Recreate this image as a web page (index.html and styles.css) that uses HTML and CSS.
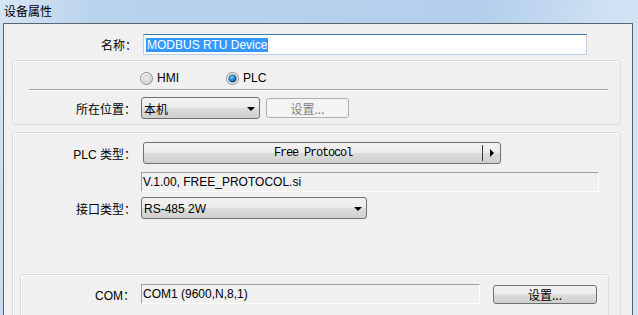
FILE: index.html
```html
<!DOCTYPE html>
<html lang="zh-CN">

<head>
    <meta charset="UTF-8">
    <meta name="viewport" content="width=device-width, initial-scale=1.0">
    <title>设备属性</title>
    <link rel="stylesheet" href="styles.css">
</head>

<body>
    <div class="title-bar">设备属性</div>

    <div class="panel">
        <div class="row name-row">
            <span class="label name-label">名称：</span>
            <div class="name-input"><span class="selected">MODBUS RTU Device</span></div>
        </div>

        <div class="group group-device">
            <div class="radio-row">
                <label class="radio radio-hmi">
                    <svg width="13" height="13" viewBox="0 0 13 13">
                        <defs>
                            <radialGradient id="rg-off" cx="0.35" cy="0.3" r="0.8">
                                <stop offset="0" stop-color="#ffffff" />
                                <stop offset="1" stop-color="#d0d0d0" />
                            </radialGradient>
                        </defs>
                        <circle cx="6.5" cy="6.5" r="6" fill="url(#rg-off)" stroke="#8f8f8f" />
                        <circle cx="6.5" cy="6.5" r="3.6" fill="#e2e2e2" stroke="#c4c4c4" stroke-width="0.6" />
                    </svg>
                    <span>HMI</span>
                </label>
                <label class="radio">
                    <svg width="13" height="13" viewBox="0 0 13 13">
                        <defs>
                            <radialGradient id="rg-dot" cx="0.4" cy="0.35" r="0.75">
                                <stop offset="0" stop-color="#7ed0ff" />
                                <stop offset="0.6" stop-color="#1a74c0" />
                                <stop offset="1" stop-color="#0b3f74" />
                            </radialGradient>
                        </defs>
                        <circle cx="6.5" cy="6.5" r="6" fill="#efefef" stroke="#8f8f8f" />
                        <circle cx="6.5" cy="6.5" r="3.8" fill="url(#rg-dot)" stroke="#1d4f7e" stroke-width="0.6" />
                    </svg>
                    <span>PLC</span>
                </label>
            </div>
            <div class="separator"></div>
            <div class="row">
                <span class="label group-label">所在位置：</span>
                <div class="combo combo-location">
                    <span>本机</span>
                    <span class="arrow-down"></span>
                </div>
                <div class="button button-disabled">设置...</div>
            </div>
        </div>

        <div class="group group-plc">
            <div class="row">
                <span class="label group-label">PLC 类型：</span>
                <div class="plc-button">
                    <span class="plc-text">Free Protocol</span>
                    <span class="plc-divider"></span>
                    <span class="plc-arrow"><span class="arrow-right"></span></span>
                </div>
            </div>
            <div class="info-box version-box">V.1.00, FREE_PROTOCOL.si</div>
            <div class="row interface-row">
                <span class="label group-label">接口类型：</span>
                <div class="combo combo-interface">
                    <span>RS-485 2W</span>
                    <span class="arrow-down"></span>
                </div>
            </div>

            <div class="group group-com">
                <div class="row">
                    <span class="label com-label">COM：</span>
                    <div class="info-box com-box">COM1 (9600,N,8,1)</div>
                    <div class="button button-setup">设置...</div>
                </div>
            </div>
        </div>
    </div>
</body>

</html>
```

FILE: styles.css
```css
body {
    margin: 0;
    height: 315px;
    overflow: hidden;
    font-family: "Liberation Sans", "Noto Sans CJK SC", sans-serif;
    font-size: 12px;
    color: #000;
    background: linear-gradient(100deg, #d6e5f4 0%, #b9d3ed 14%, #b3cfeb 70%, #cfe1f3 88%, #d4e4f4 100%);
}

.title-bar {
    height: 23px;
    line-height: 22px;
    padding-left: 4px;
    font-family: "Noto Sans CJK SC", sans-serif;
    font-size: 12px;
}

.panel {
    margin: 0 5px 0 3px;
    height: 300px;
    padding: 10px 11px 0 8px;
    background-color: #f0f0f0;
    border-top: 1px solid #5a6470;
    border-left: 1px solid #5a6470;
    border-right: 1px solid #5a6470;
}

.row {
    display: flex;
    align-items: center;
}

.label {
    text-align: right;
    white-space: nowrap;
    font-family: "Liberation Sans", "Noto Sans CJK SC", sans-serif;
}

.name-label {
    width: 125px;
    margin-right: 6px;
}

.group-label {
    width: 123px;
    margin-right: 5px;
}

.com-label {
    width: 114px;
    margin-right: 6px;
}

.name-input {
    box-sizing: border-box;
    width: 444px;
    height: 21px;
    padding: 3px 0 0 2px;
    background-color: #fff;
    border: 1px solid #b7d0e8;
    border-top-color: #3c7bb0;
}

.selected {
    display: inline-block;
    height: 14px;
    line-height: 14px;
    padding: 0 1px;
    background-color: #3399ff;
    color: #fff;
}

.group {
    border: 1px solid #d5dfe5;
    border-radius: 3px;
    box-shadow: inset 1px 1px 0 #fff;
}

.group-device {
    margin-top: 5px;
    padding: 9px 0 5px 0;
}

.radio-row {
    display: flex;
    height: 16px;
    align-items: center;
    padding-left: 127px;
}

.radio {
    display: flex;
    align-items: center;
    gap: 4px;
}

.radio svg {
    display: block;
}

.radio-hmi {
    width: 86px;
}

.separator {
    margin: 3px 12px 7px 16px;
    height: 1px;
    background-color: #a0a0a0;
    box-shadow: 0 1px 0 #fff;
}

.combo {
    box-sizing: border-box;
    height: 22px;
    display: flex;
    align-items: center;
    justify-content: space-between;
    padding: 1px 4px 0 2px;
    border: 1px solid #707070;
    border-radius: 3px;
    background: linear-gradient(#f2f2f2 0%, #ebebeb 50%, #dddddd 50%, #cfcfcf 100%);
}

.combo-location {
    width: 119px;
}

.combo-interface {
    width: 226px;
}

.arrow-down {
    width: 0;
    height: 0;
    border-left: 4px solid transparent;
    border-right: 4px solid transparent;
    border-top: 4px solid #000;
}

.button {
    box-sizing: border-box;
    display: flex;
    align-items: center;
    justify-content: center;
    border-radius: 3px;
    font-family: "Noto Sans CJK SC", sans-serif;
}

.button-disabled {
    width: 83px;
    height: 20px;
    margin-left: 6px;
    color: #838383;
    background-color: #f4f4f4;
    border: 1px solid #adb2b5;
}

.group-plc {
    margin-top: 7px;
    height: 300px;
    padding-top: 9px;
}

.plc-button {
    box-sizing: border-box;
    width: 358px;
    height: 22px;
    margin-left: 2px;
    display: flex;
    align-items: center;
    border: 1px solid #707070;
    border-radius: 3px;
    background: linear-gradient(#f2f2f2 0%, #ebebeb 50%, #dddddd 50%, #cfcfcf 100%);
}

.plc-text {
    flex: 1;
    text-align: center;
    font-family: "Liberation Mono", monospace;
    font-size: 12px;
    letter-spacing: -1.2px;
}

.plc-divider {
    width: 1px;
    height: 16px;
    background-color: #3c3c3c;
}

.plc-arrow {
    width: 17px;
    display: flex;
    justify-content: center;
}

.arrow-right {
    width: 0;
    height: 0;
    border-top: 4px solid transparent;
    border-bottom: 4px solid transparent;
    border-left: 4px solid #000;
}

.info-box {
    box-sizing: border-box;
    height: 20px;
    line-height: 18px;
    padding-left: 1px;
    border: 1px solid #fff;
    border-top-color: #a0a0a0;
    border-left-color: #a0a0a0;
}

.version-box {
    width: 458px;
    margin: 8px 0 0 128px;
}

.interface-row {
    margin-top: 5px;
}

.group-com {
    margin: 55px 11px 0 7px;
    height: 60px;
    padding-top: 9px;
}

.com-box {
    width: 339px;
}

.button-setup {
    width: 104px;
    height: 19px;
    margin-left: 13px;
    border: 1px solid #707070;
    background: linear-gradient(#f2f2f2 0%, #ebebeb 50%, #dddddd 50%, #cfcfcf 100%);
}
```
